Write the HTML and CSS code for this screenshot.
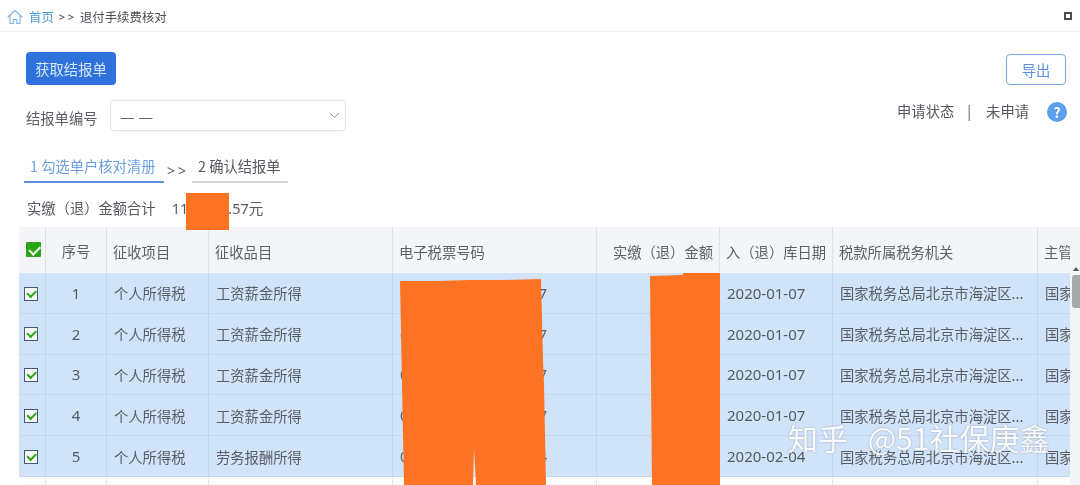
FILE: index.html
```html
<!DOCTYPE html>
<html lang="zh-CN">
<head>
<meta charset="utf-8">
<title>退付手续费核对</title>
<link rel="stylesheet" href="styles.css">
</head>
<body>
<div class="page">
  <header class="topbar">
    <div class="crumbs">
      <svg class="home" viewBox="0 0 16 16" width="16" height="16"><path d="M1 8 L8 1.5 L15 8 M3 6.5 V14.5 H6.3 V10.5 H9.7 V14.5 H13 V6.5" fill="none" stroke="#7db4e6" stroke-width="1.1" stroke-linejoin="round" stroke-linecap="round"/></svg>
      <a class="crumb-link">首页</a>
      <span class="crumb-sep">&gt;&gt;</span>
      <span class="crumb-cur">退付手续费核对</span>
    </div>
    <span class="winbtn"></span>
  </header>

  <main class="content">
    <div class="row-actions">
      <button class="btn-primary">获取结报单</button>
      <button class="btn-outline">导出</button>
    </div>
    <div class="row-form">
      <label class="form-label">结报单编号</label>
      <div class="select">
        <span class="select-val">— —</span>
        <svg viewBox="0 0 12 8" width="11" height="7"><path d="M1 1.2 L6 6.2 L11 1.2" fill="none" stroke="#8a8f96" stroke-width="1.1"/></svg>
      </div>
      <div class="status">
        <span>申请状态</span><span class="status-sep">|</span><span>未申请</span>
        <span class="help">?</span>
      </div>
    </div>
    <div class="steps">
      <div class="step step-on">1 勾选单户核对清册</div>
      <span class="step-sep">&gt;&gt;</span>
      <div class="step">2 确认结报单</div>
    </div>
    <div class="sum">
      <span>实缴（退）金额合计</span>
      <span class="sum-val">11<span class="sum-gap"></span>.57元</span>
    </div>
  </main>

  <section class="grid-wrap">
    <div class="grid-clip">
      <table class="grid">
        <colgroup>
          <col class="c-chk"><col class="c-no"><col class="c-item"><col class="c-kind"><col class="c-ticket"><col class="c-amt"><col class="c-date"><col class="c-org"><col class="c-last">
        </colgroup>
        <thead>
          <tr>
            <th class="center"><span class="chk-all"></span></th>
            <th class="center">序号</th>
            <th>征收项目</th>
            <th>征收品目</th>
            <th>电子税票号码</th>
            <th class="right">实缴（退）金额</th>
            <th>入（退）库日期</th>
            <th>税款所属税务机关</th>
            <th>主管税务机关</th>
          </tr>
        </thead>
        <tbody>
          <tr>
            <td class="center"><span class="chk"></span></td><td class="center num">1</td><td>个人所得税</td><td>工资薪金所得</td>
            <td><span class="ticket"><span>0</span><span>7</span></span></td><td></td><td class="num">2020-01-07</td>
            <td>国家税务总局北京市海淀区...</td><td>国家税务总局</td>
          </tr>
          <tr>
            <td class="center"><span class="chk"></span></td><td class="center num">2</td><td>个人所得税</td><td>工资薪金所得</td>
            <td><span class="ticket"><span>0</span><span>7</span></span></td><td></td><td class="num">2020-01-07</td>
            <td>国家税务总局北京市海淀区...</td><td>国家税务总局</td>
          </tr>
          <tr>
            <td class="center"><span class="chk"></span></td><td class="center num">3</td><td>个人所得税</td><td>工资薪金所得</td>
            <td><span class="ticket"><span>0</span><span>7</span></span></td><td></td><td class="num">2020-01-07</td>
            <td>国家税务总局北京市海淀区...</td><td>国家税务总局</td>
          </tr>
          <tr>
            <td class="center"><span class="chk"></span></td><td class="center num">4</td><td>个人所得税</td><td>工资薪金所得</td>
            <td><span class="ticket"><span>0</span><span>7</span></span></td><td></td><td class="num">2020-01-07</td>
            <td>国家税务总局北京市海淀区...</td><td>国家税务总局</td>
          </tr>
          <tr>
            <td class="center"><span class="chk"></span></td><td class="center num">5</td><td>个人所得税</td><td>劳务报酬所得</td>
            <td><span class="ticket"><span>0</span><span>4</span></span></td><td></td><td class="num">2020-02-04</td>
            <td>国家税务总局北京市海淀区...</td><td>国家税务总局</td>
          </tr>
          <tr class="row-next">
            <td></td><td></td><td></td><td></td><td></td><td></td><td></td><td></td><td></td>
          </tr>
        </tbody>
      </table>
    </div>
    <div class="scrollbar">
      <span class="sb-arrow"></span>
      <span class="sb-thumb"></span>
    </div>
  </section>

  <svg class="redact" viewBox="0 0 1080 485" width="1080" height="485">
    <path d="M186 193 H229 V230 H186 Z"/>
    <path d="M400 281 L436 281 L470 280 L505 280 L541 279 L543 360 L544 385 L546 485 L476 485 L474 448 L473 485 L404 485 L402 385 Z"/>
    <path d="M650 276 L683 275 L683 273 L720 273 L720 485 L652 485 Z"/>
  </svg>
  <div class="watermark">知乎 @51社保庚鑫</div>
</div>
</body>
</html>
```
FILE: styles.css
```css
* { box-sizing: border-box; }
html, body { margin: 0; padding: 0; height: 100%; overflow: hidden; background: #fff; }
body {
  font-family: "Noto Sans CJK SC", "Noto Sans", sans-serif;
  font-size: 14.3px;
  color: #555a60;
}
.page { position: relative; width: 1080px; height: 485px; overflow: hidden; filter: blur(0.4px); }

.topbar {
  height: 32px;
  border-bottom: 1px solid #f1f2f4;
  display: flex;
  align-items: center;
  justify-content: space-between;
  padding: 3px 8px 0 7px;
}
.crumbs { display: flex; align-items: center; font-size: 12.4px; line-height: 16px; }
.home { margin-right: 6px; }
.crumb-link { color: #4f9ad6; }
.crumb-sep { margin: 0 3px 0 5px; color: #555a60; font-size: 11.5px; font-family: "Noto Sans", sans-serif; letter-spacing: 2.5px; font-weight: 600; }
.crumb-cur { color: #4a4e54; }
.winbtn { width: 8px; height: 8px; border: 2px solid #4a4e54; margin-top: -2px; }

.content { padding: 20px 14px 0 26px; }
.row-actions { display: flex; justify-content: space-between; align-items: flex-start; }
.btn-primary {
  width: 90px; height: 33px; border: 0; border-radius: 4px;
  background: #2f72dc; color: #d6e6fb;
  font: inherit; padding: 0;
}
.btn-outline {
  width: 60px; height: 31px; margin-top: 2px;
  border: 1px solid #7ba5e0; border-radius: 4px; background: #fff; color: #5a93e2;
  font: inherit; padding: 0;
}
.row-form { display: flex; align-items: flex-start; height: 31px; margin-top: 15px; }
.form-label { width: 84px; margin-top: 7px; color: #5b5f65; }
.select {
  width: 236px; height: 31px;
  border: 1px solid #e3e5e9; border-radius: 4px;
  box-shadow: 0 0 3px rgba(0,0,0,.08);
  display: flex; align-items: center; justify-content: space-between;
  padding: 0 5px 0 9px;
  color: #666;
}
.select-val { font-size: 16.5px; line-height: 20px; }
.status { margin-left: auto; margin-right: -1px; margin-top: -2px; display: flex; align-items: center; color: #55595f; }
.status-sep { margin: 0 15px 0 13px; }
.help {
  width: 20px; height: 20px; border-radius: 50%; margin-left: 18px; margin-top: 4px;
  background: #5aa0ec; color: #fff; font-weight: 700; font-size: 14px;
  display: flex; align-items: center; justify-content: center;
}
.steps { display: flex; align-items: flex-end; height: 28px; margin-top: 24px; margin-left: -2px; }
.step { height: 28px; padding: 0 6px; border-bottom: 2px solid #d4d6da; line-height: 22px; color: #55595f; width: 96px; white-space: nowrap; }
.step-on { width: 140px; border-bottom-color: #5b93d8; color: #6a9fe6; }
.step-sep { width: 28px; padding-left: 3px; align-self: flex-start; margin-top: 6px; font-size: 14px; color: #555a60; font-family: "Noto Sans", sans-serif; letter-spacing: 3px; }
.sum { margin-top: 15px; margin-left: 1px; height: 20px; line-height: 20px; display: flex; }
.sum-val { margin-left: 16px; font-family: "Noto Sans", "Noto Sans CJK SC", sans-serif; font-size: 14.5px; }
.sum-gap { display: inline-block; width: 40px; }

.grid-wrap { position: absolute; left: 19px; top: 227px; right: 0; bottom: 0; display: flex; }
.grid-clip { width: 1051px; overflow: hidden; }
.grid { table-layout: fixed; border-collapse: separate; border-spacing: 0; width: 1141px; }
.c-chk { width: 27px; } .c-no { width: 61px; } .c-item { width: 102px; } .c-kind { width: 184px; }
.c-ticket { width: 204px; } .c-amt { width: 123px; } .c-date { width: 113px; } .c-org { width: 205px; } .c-last { width: 122px; }
.grid th, .grid td {
  padding: 0 6px;
  white-space: nowrap; overflow: hidden;
  border-right: 1px solid #dfe2e7;
  text-align: left;
}
.grid th { height: 46px; background: #f4f5f8; font-weight: 400; color: #5d6167; padding-top: 3px; }
.grid td { height: 40.8px; background: #d0e3f9; border-right-color: #c3d5ea; border-bottom: 1px solid #c4d7ec; color: #5a5f66; padding-left: 7px; }
.grid .center { text-align: center; padding: 0; }
.grid .right { text-align: right; }
.grid .num { font-family: "Noto Sans", sans-serif; font-size: 15px; color: #565b62; }
.grid .row-next td { background: #fbfbfc; height: 8px; padding: 0; border-top: 4px solid #fff; border-bottom: 0; border-right-color: #e4e6ea; }

.chk-all, .chk { display: inline-block; position: relative; vertical-align: middle; }
.chk-all { width: 15px; height: 15px; background: #2aa515; border-radius: 1px; margin: -5px 0 1px 3px; }
.chk { width: 14px; height: 14px; border: 1.5px solid #47567f; background: #f4f8f2; margin: -2px 0 2px -2px; }
.chk-all::after, .chk::after {
  content: ""; position: absolute; transform: rotate(-45deg);
  border-left: 2px solid; border-bottom: 2px solid;
}
.chk-all::after { left: 3px; top: 3.5px; width: 9px; height: 4.5px; color: #fff; }
.chk::after { left: 2px; top: 2px; width: 7px; height: 3.5px; color: #2aa515; }

.ticket { display: flex; justify-content: space-between; width: 147px; font-family: "Noto Sans", sans-serif; font-size: 15px; }

.scrollbar { flex: 1; background: #f3f4f6; position: relative; }
.sb-arrow { position: absolute; left: 3px; top: 40px; border: 3.5px solid transparent; border-top: 0; border-bottom: 4px solid #55595f; }
.sb-thumb { position: absolute; left: 2px; right: 0; top: 48px; height: 33px; background: #a6a8ab; border-radius: 3px 0 0 3px; }

.redact { position: absolute; left: 0; top: 0; pointer-events: none; }
.redact path { fill: #ff7322; }
.watermark {
  position: absolute; left: 788px; top: 416px;
  font-size: 30px; line-height: 42px; color: rgba(255,255,255,.92);
  text-shadow: 0 0 2px rgba(80,80,80,.45);
  white-space: nowrap; word-spacing: 13px;
}
```
